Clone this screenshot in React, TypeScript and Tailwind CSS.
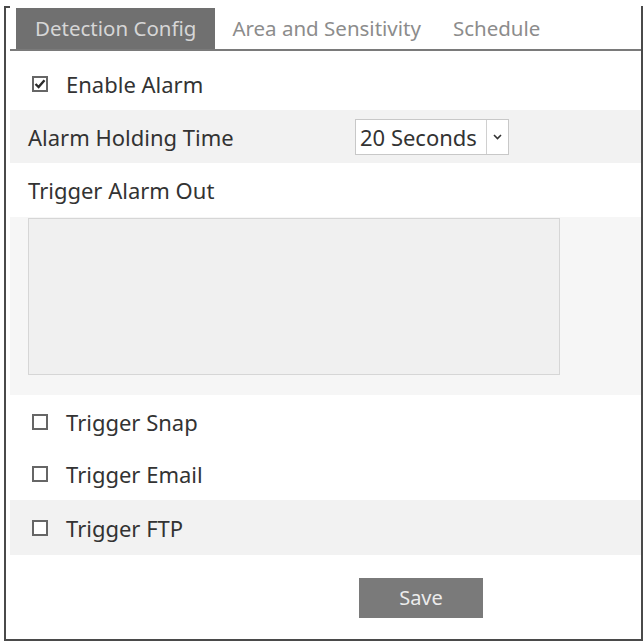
import React from "react";

const font = { fontFamily: '"Noto Sans", "Open Sans", sans-serif' };

function Box({ checked }: { checked?: boolean }) {
  return (
    <span className="w-[16px] h-[16px] border-2 border-[#666] bg-white flex items-center justify-center shrink-0">
      {checked && (
        <svg width="12" height="12" viewBox="0 0 12 12">
          <path d="M1.5 6 L4.6 9 L10.5 2.2" fill="none" stroke="#2a2a2a" strokeWidth="2.4" />
        </svg>
      )}
    </span>
  );
}

function CheckRow({ label, checked, gray, h, pt }: { label: string; checked?: boolean; gray?: boolean; h: string; pt?: string }) {
  return (
    <div className={`ml-[4px] flex items-center pl-[22px] gap-[18px] ${h} ${pt ?? ""} ${gray ? "bg-[#f2f2f2]" : ""}`}>
      <Box checked={checked} />
      <span className="text-[22px] text-[#333] leading-none">{label}</span>
    </div>
  );
}

export default function App() {
  return (
    <div className="w-[643px] h-[642px] bg-white overflow-hidden" style={font}>
      <div className="ml-[4px] mt-[6px] w-[639px] h-[635px] border-l-2 border-r-2 border-b-2 border-[#4a4a4a] flex flex-col">
        <div className="w-[6px] h-0 border-t-2 border-[#4a4a4a] -ml-[2px]"></div>
        <div className="ml-[4px] border-b-2 border-[#7a7a7a] flex pl-[6px] h-[43px]">
          <div className="bg-[#707070] text-[#d6d6d6] text-[20.5px] px-[19px] flex items-center h-[41px]">Detection Config</div>
          <div className="text-[#8c8c8c] text-[20.5px] px-[17px] flex items-center h-[41px]">Area and Sensitivity</div>
          <div className="text-[#8c8c8c] text-[20.5px] px-[15px] flex items-center h-[41px]">Schedule</div>
        </div>
        <CheckRow label="Enable Alarm" checked h="h-[59px]" pt="pt-[6px]" />
        <div className="ml-[4px] h-[53px] bg-[#f2f2f2] flex items-center pl-[18px]">
          <span className="text-[22px] text-[#333] w-[327px] leading-none">Alarm Holding Time</span>
          <div className="w-[154px] h-[36px] border border-[#c8c8c8] bg-white flex">
            <span className="flex-1 flex items-center pl-[4px] text-[22px] text-[#333] leading-none">20 Seconds</span>
            <span className="w-[22px] border-l border-[#d0d0d0] flex items-center justify-center">
              <svg width="9" height="6" viewBox="0 0 9 6">
                <path d="M1 1 L4.5 4.5 L8 1" fill="none" stroke="#333" strokeWidth="1.6" />
              </svg>
            </span>
          </div>
        </div>
        <div className="ml-[4px] h-[54px] flex items-center pl-[18px]">
          <span className="text-[22px] text-[#333] leading-none">Trigger Alarm Out</span>
        </div>
        <div className="ml-[4px] h-[178px] bg-[#f6f6f6] pl-[18px] pt-[1px]">
          <div className="w-[532px] h-[157px] border border-[#d6d6d6] bg-[#f0f0f0]"></div>
        </div>
        <CheckRow label="Trigger Snap" h="h-[53px]" />
        <CheckRow label="Trigger Email" h="h-[52px]" />
        <CheckRow label="Trigger FTP" gray h="h-[55px]" />
        <div className="flex pl-[353px] pt-[23px]">
          <button className="w-[124px] h-[40px] bg-[#7a7a7a] text-[#ececec] text-[20px]">Save</button>
        </div>
      </div>
    </div>
  );
}
